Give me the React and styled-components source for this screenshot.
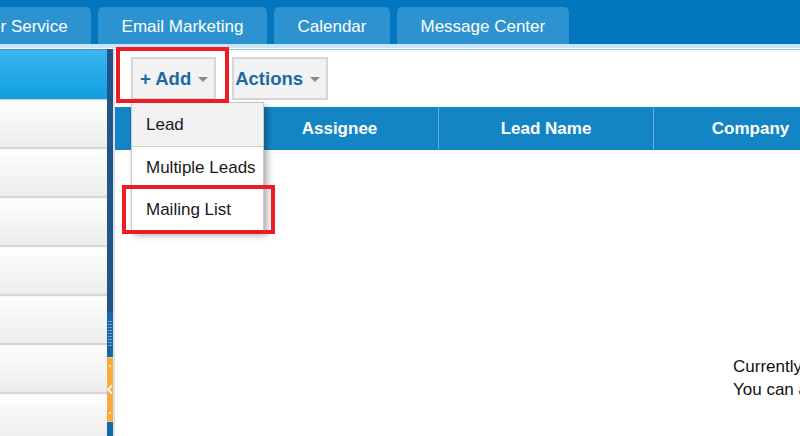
import React from "react";
import styled, { createGlobalStyle } from "styled-components";

const GlobalStyle = createGlobalStyle`
  html, body { margin: 0; padding: 0; overflow: hidden; }
  body { font-family: "Liberation Sans", Arial, sans-serif; background: #fff; }
`;

const Page = styled.div`
  width: 800px;
  height: 436px;
  overflow: hidden;
  display: flex;
  flex-direction: column;
`;

const TopBar = styled.div`
  height: 44px;
  flex: none;
  background: #0277bf;
  display: flex;
  align-items: flex-end;
  gap: 7px;
  margin-left: -91px;
`;

const Tab = styled.div`
  height: 37px;
  box-sizing: border-box;
  padding: 2px 23.5px 0;
  background: #2d93d0;
  border-radius: 5px 5px 0 0;
  color: #fff;
  font-size: 17px;
  display: flex;
  align-items: center;
  white-space: nowrap;
`;

const Stripe = styled.div`
  flex: none;
  height: 4px;
  background: #c8e4f5;
  border-bottom: 1px solid #fff;
`;

const Main = styled.div`
  flex: 1;
  display: flex;
  min-height: 0;
`;

const Sidebar = styled.div`
  width: 107px;
  flex: none;
  display: flex;
  flex-direction: column;
`;

const SideItem = styled.div`
  flex: none;
  height: ${(p) => (p.$active ? "49px" : "46px")};
  background: ${(p) =>
    p.$active
      ? "linear-gradient(#3bb6f0, #109ddf)"
      : "linear-gradient(#fefefe, #ececec)"};
  border-top: 1px solid ${(p) => (p.$active ? "#4a95c8" : "#f6f6f6")};
  border-bottom: ${(p) => (p.$active ? "1px solid #d0d0d0" : "2px solid #d9d4d9")};
`;

const Splitter = styled.div`
  width: 6px;
  flex: none;
  display: flex;
  flex-direction: column;
  border-right: 2px solid #dde2e8;
`;

const SplitSeg = styled.div`
  flex: ${(p) => (p.$grow ? 1 : "none")};
  height: ${(p) => p.$h || "auto"};
  background: ${(p) => p.$bg};
  display: flex;
  align-items: center;
  justify-content: center;
  position: relative;
`;

const Grip = styled.div`
  width: 4px;
  height: 27px;
  background: repeating-linear-gradient(
    #6fa3cf 0 1px,
    #1f62a0 1px 3px
  );
`;

const Collapse = styled.div`
  width: 100%;
  height: 100%;
  display: flex;
  flex-direction: column;
  align-items: center;
  justify-content: space-between;
  padding: 7px 0;
  box-sizing: border-box;
  border-top: 1px solid #f3c877;
  border-bottom: 1px solid #f3c877;
`;

const Dot = styled.div`
  width: 2px;
  height: 2px;
  background: #ffe7c0;
`;

const Content = styled.div`
  flex: 1;
  min-width: 0;
  position: relative;
  border-top: 1px solid #8fc3e8;
  display: flex;
  flex-direction: column;
`;

const Toolbar = styled.div`
  height: 57px;
  flex: none;
  box-sizing: border-box;
  padding: 7px 0 0 16px;
  display: flex;
  gap: 16px;
  align-items: flex-start;
`;

const ToolButton = styled.div`
  height: 43px;
  box-sizing: border-box;
  border: 2px solid #d6d6d6;
  background: #f2f2f2;
  padding: 0 6px 0 ${(p) => p.$padLeft}px;
  display: flex;
  align-items: center;
  gap: ${(p) => p.$gap}px;
  color: #1a6aa8;
  font-weight: bold;
  font-size: 18.5px;
  white-space: nowrap;
`;

const Caret = styled.span`
  width: 0;
  height: 0;
  border-left: 5px solid transparent;
  border-right: 5px solid transparent;
  border-top: 5px solid #8a8a8a;
  margin-top: 2px;
`;

const HeaderRow = styled.div`
  height: 43px;
  flex: none;
  background: #1485c4;
  display: grid;
  grid-template-columns: 125px 198px 215px 194px 1fr;
`;

const HeaderCell = styled.div`
  color: #fff;
  font-weight: bold;
  font-size: 17px;
  display: flex;
  align-items: center;
  justify-content: center;
  white-space: nowrap;
  border-left: ${(p) => (p.$first ? "none" : "1px solid #5eaedb")};
`;

const Body = styled.div`
  flex: 1;
  padding: 205px 0 0 618px;
  font-size: 17px;
  line-height: 23px;
  color: #111;
  white-space: nowrap;
  overflow: hidden;
`;

const Dropdown = styled.div`
  position: absolute;
  left: 16px;
  top: 52px;
  width: 133px;
  box-sizing: border-box;
  background: #fff;
  border: 1px solid #c8c8c8;
  box-shadow: 3px 4px 7px rgba(0, 0, 0, 0.35);
  z-index: 2;
`;

const MenuItem = styled.div`
  height: ${(p) => p.$h}px;
  box-sizing: border-box;
  padding-left: 14px;
  display: flex;
  align-items: center;
  font-size: 17px;
  color: #1a1a1a;
  background: ${(p) => (p.$hover ? "#f1f1f1" : "#fff")};
  border-bottom: ${(p) => (p.$sep ? "1px solid #cfcfcf" : "none")};
  white-space: nowrap;
`;

const Highlight = styled.div`
  position: absolute;
  left: ${(p) => p.$x}px;
  top: ${(p) => p.$y}px;
  width: ${(p) => p.$w}px;
  height: ${(p) => p.$h}px;
  box-sizing: border-box;
  border: 4px solid #ec1c24;
  z-index: 3;
  pointer-events: none;
`;

const Chevron = () => (
  <svg width="6" height="9" viewBox="0 0 6 9">
    <path d="M5 0.5 L1 4.5 L5 8.5" stroke="#fff" strokeWidth="1.8" fill="none" />
  </svg>
);

export default function App() {
  const tabs = ["Customer Service", "Email Marketing", "Calendar", "Message Center"];
  return (
    <>
      <GlobalStyle />
      <Page>
        <TopBar>
          {tabs.map((t) => (
            <Tab key={t}>{t}</Tab>
          ))}
        </TopBar>
        <Stripe />
        <Main>
          <Sidebar>
            <SideItem $active />
            {[0, 1, 2, 3, 4, 5, 6].map((i) => (
              <SideItem key={i} />
            ))}
          </Sidebar>
          <Splitter>
            <SplitSeg $grow $bg="#22548a" />
            <SplitSeg $h="45px" $bg="#1568a6">
              <Grip />
            </SplitSeg>
            <SplitSeg $h="65px" $bg="#fcaa3b">
              <Collapse>
                <Dot />
                <Chevron />
                <Dot />
              </Collapse>
            </SplitSeg>
            <SplitSeg $h="14px" $bg="#1568a6" />
          </Splitter>
          <Content>
            <Toolbar>
              <ToolButton $padLeft={7} $gap={7}>
                + Add <Caret />
              </ToolButton>
              <ToolButton $padLeft={1} $gap={7}>
                Actions <Caret />
              </ToolButton>
            </Toolbar>
            <HeaderRow>
              <HeaderCell $first />
              <HeaderCell>Assignee</HeaderCell>
              <HeaderCell>Lead Name</HeaderCell>
              <HeaderCell>Company</HeaderCell>
              <HeaderCell>Status</HeaderCell>
            </HeaderRow>
            <Body>
              <div>Currently there are no leads to display.</div>
              <div>You can add leads with the + Add button.</div>
            </Body>
            <Dropdown>
              <MenuItem $h={44} $hover $sep>Lead</MenuItem>
              <MenuItem $h={42}>Multiple Leads</MenuItem>
              <MenuItem $h={41}>Mailing List</MenuItem>
            </Dropdown>
            <Highlight $x={1} $y={-3} $w={113} $h={56} />
            <Highlight $x={7} $y={135} $w={153} $h={49} />
          </Content>
        </Main>
      </Page>
    </>
  );
}
